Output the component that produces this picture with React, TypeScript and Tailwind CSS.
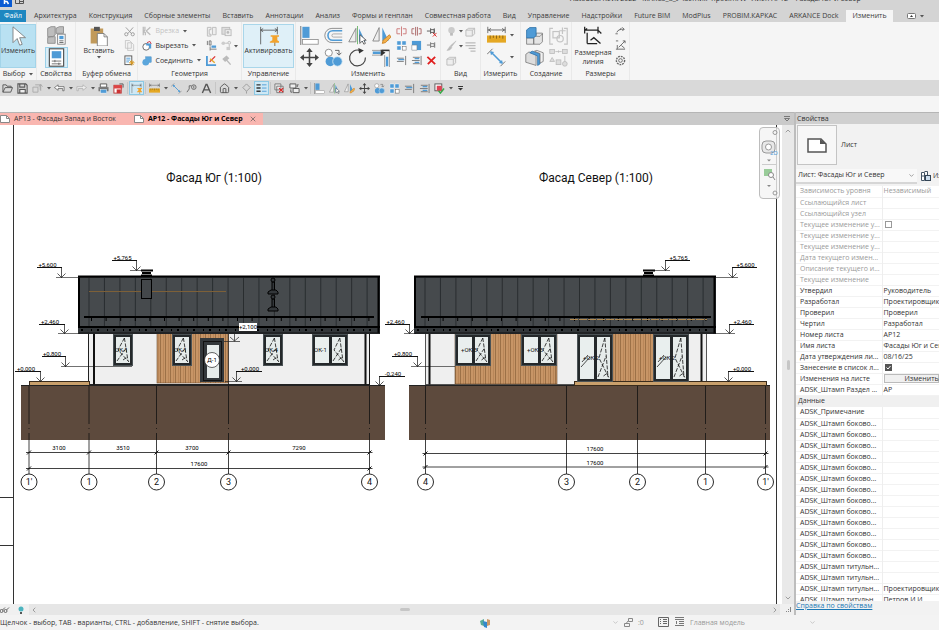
import React from 'react';
import { ChevronDown, ChevronLeft, ChevronRight, ChevronUp, X, Home } from 'lucide-react';

interface IconProps {
  name: string;
  size?: number;
}

const BLUE = '#4f9bd6';
const DARK = '#555';

/* All ribbon glyphs share a 24x24 box */
const glyphs: Record<string, React.ReactNode> = {
  cursor: <path d="M6 1v19l5-5 3 8 3-1-3-8h7z" fill="#fff" stroke="#777" />,
  types: (
    <>
      <path d="M2 4l4-2h5v10l-3 2H2zM12 4l4-2h5v8H12zM2 15l4-1h5v8H2z" fill="#bdbdbd" stroke="#888" />
      <rect x="14" y="11" width="9" height="12" fill="#fff" stroke="#777" />
      <rect x="16" y="13" width="5" height="4" fill={BLUE} />
      <path d="M16 19h5M16 21h5" stroke={DARK} />
    </>
  ),
  props: (
    <>
      <rect x="3" y="1" width="18" height="22" fill="#fff" stroke={DARK} strokeWidth="1.5" />
      <rect x="6" y="4" width="12" height="9" fill={BLUE} />
      <path d="M6 16.500h12M6 20h12M10 15v3M15 18.500v3" stroke={DARK} />
    </>
  ),
  paste: (
    <>
      <rect x="2" y="3" width="15" height="18" fill="#c19a5b" />
      <rect x="6" y="1" width="7" height="5" fill="#555" />
      <path d="M10 9h8l4 4v11H10z" fill="#fff" stroke="#777" />
      <path d="M18 9v4h4" fill="none" stroke="#777" />
    </>
  ),
  cut: (
    <g stroke="#999" strokeWidth="2" fill="none">
      <path d="M4 3l13 14M20 3L8 17" />
      <circle cx="5" cy="18" r="3.500" />
      <circle cx="19" cy="18" r="3.500" />
    </g>
  ),
  copy: <path d="M3 1h9l4 4v13H3zM8 6h9l4 4v13H8z" fill="#f2f2f2" stroke="#bbb" strokeWidth="1.5" />,
  matchType: (
    <>
      <rect x="2" y="2" width="15" height="19" fill="#fff" stroke={DARK} strokeWidth="2" />
      <path d="M5 7h9M5 11h9M5 15h6" stroke={BLUE} strokeWidth="2" />
      <path d="M17 11v12M11 17h12M13 13l8 8M21 13l-8 8" stroke="#d9981e" strokeWidth="2" />
    </>
  ),
  cope: <path d="M3 2v20M7 2v8l-3 3 4 3v6M10 12L20 3M10 12l10 9" fill="none" stroke="#bbb" strokeWidth="3" />,
  trim: (
    <>
      <circle cx="10" cy="14" r="8" fill="#fff" stroke={DARK} strokeWidth="2" />
      <path d="M10 6h12v12h-5V11H10z" fill={BLUE} />
      <path d="M12 4l7-3 3 6" fill="none" stroke="#c23" strokeWidth="2" />
    </>
  ),
  join: (
    <>
      <rect x="9" y="2" width="13" height="13" fill="#5ba6dc" stroke="#2b78b8" />
      <circle cx="9" cy="15" r="8" fill="#5ba6dc" />
    </>
  ),
  wallJoin: <path d="M3 3h8v5H7v10h4v4H3zM14 3h8v16h-8z" fill="#eee" stroke="#bbb" strokeWidth="2" />,
  face: (
    <>
      <rect x="2" y="3" width="17" height="15" fill="#ddd" stroke="#bbb" strokeWidth="2" />
      <rect x="9" y="8" width="13" height="13" fill="#eee" stroke="#bbb" strokeWidth="2" />
      <circle cx="15" cy="14" r="3" fill="#bbb" />
    </>
  ),
  unjoin: (
    <>
      <path d="M3 2v9M7 2h4v9H7zM9 20h14M9 14v9" fill="none" stroke="#777" strokeWidth="2" />
      <path d="M12 12h10v5H12z" fill={BLUE} />
    </>
  ),
  link: (
    <>
      <path d="M9 7h6M18 10v5" stroke="#bbb" strokeWidth="2" />
      <circle cx="5" cy="7" r="4" fill="#ccc" />
      <circle cx="18" cy="6" r="3" fill="#eee" stroke="#bbb" strokeWidth="2" />
      <rect x="12" y="15" width="8" height="7" fill="#ccc" />
    </>
  ),
  paint: (
    <>
      <path d="M2 2v20h20" fill="none" stroke={BLUE} strokeWidth="4" />
      <path d="M8 15L20 3" stroke="#d33" strokeWidth="3" />
      <path d="M9 8l10 9" stroke="#e3a62a" strokeWidth="3" />
    </>
  ),
  hammer: <path d="M5 9l7-6 4 4-7 6zM11 10l10 11" fill="#bbb" stroke="#bbb" strokeWidth="3" />,
  activate: (
    <>
      <path d="M2 1v21M22 1v9M2 5h20M5 3L2 5l3 2M19 3l3 2-3 2" fill="none" stroke={DARK} />
      <path d="M14 11h10v2h-2v4l3 2v1H13v-1l3-2v-4h-2z" fill="#f2a32c" />
      <path d="M19 20v4" stroke="#8a5a10" />
    </>
  ),
  align: (
    <>
      <rect x="3" y="1" width="9" height="14" fill={BLUE} />
      <rect x="3" y="17" width="20" height="6" fill="#fff" stroke="#888" />
      <path d="M1 0v24" stroke={DARK} />
    </>
  ),
  offset: (
    <>
      <path d="M23 3H10a9 9 0 000 18h13" fill="none" stroke="#777" />
      <path d="M23 6H11a6 6 0 000 12h12" fill="none" stroke={BLUE} strokeWidth="2" />
      <path d="M23 10H12a2 2 0 000 4h11" fill="none" stroke="#999" />
    </>
  ),
  mirrorPick: (
    <>
      <path d="M10 3v17H1z" fill="#eee" stroke="#777" />
      <path d="M14 3v17h8z" fill={BLUE} />
      <path d="M12 0v23" stroke="#5a5" />
      <path d="M15 11v11l3-3 2 4 2-1-2-4h3z" fill="#fff" stroke="#444" />
    </>
  ),
  mirrorDraw: (
    <>
      <path d="M9 2v17H1z" fill="#eee" stroke="#777" />
      <path d="M13 2v17h8z" fill={BLUE} />
      <path d="M13 22l1-4 8-7 2 3-7 7z" fill="#f2b04a" stroke="#c77c1f" />
    </>
  ),
  move: (
    <path d="M12 0l4 5h-3v6h6V8l5 4-5 4v-3h-6v6h3l-4 5-4-5h3v-6H5v3l-5-4 5-4v3h6V5H8z" fill="#444" />
  ),
  copyEl: (
    <>
      <circle cx="6" cy="6" r="4.500" fill="#fff" stroke="#777" />
      <path d="M14 3h5v5M16 6l3 3 3-3" fill="none" stroke="#444" />
      <circle cx="8" cy="17" r="6" fill={BLUE} />
      <circle cx="17" cy="17" r="6" fill={BLUE} stroke="#d8ecf8" />
    </>
  ),
  rotate: (
    <>
      <path d="M15 3A10 10 0 1022 12" fill="none" stroke="#444" strokeWidth="1.500" />
      <path d="M13 0l7 3-6 4z" fill="#333" />
    </>
  ),
  trimCorner: (
    <>
      <path d="M0 3h14M0 9h14M16 9v15M22 3v21" fill="none" stroke="#888" />
      <path d="M1 6h10M19 11v12" stroke={BLUE} strokeWidth="3" />
      <path d="M12 3h10" stroke="#333" strokeWidth="2" />
      <path d="M11 2l6 4-6 4z" fill="#333" />
    </>
  ),
  split: <path d="M9 6H2v11h7M15 6h7v11h-7M12 1v21" fill="none" stroke="#c77" strokeWidth="2" />,
  splitGap: <path d="M7 6H2v11h5M17 6h5v11h-5M10 2v19M14 2v19" fill="none" stroke="#a66" strokeWidth="2" />,
  unpin: (
    <>
      <path d="M2 11h8M10 5v12M10 8h8v6h-8M18 5v12" fill="none" stroke={DARK} strokeWidth="2" />
      <path d="M15 15l8 8M23 15l-8 8" stroke="#d22" strokeWidth="2" />
    </>
  ),
  array: (
    <>
      <path d="M2 2h9v9H2zM13 2h9v9h-9zM2 13h9v9H2z" fill={BLUE} stroke="#fff" />
      <rect x="14" y="14" width="8" height="8" fill="#fff" stroke={DARK} />
    </>
  ),
  scale: (
    <>
      <rect x="2" y="2" width="20" height="20" fill={BLUE} />
      <rect x="2" y="11" width="11" height="11" fill="#fff" stroke="#777" />
    </>
  ),
  pin: <path d="M2 11h8M10 5v12M10 8h8v6h-8M19 5v12" fill="none" stroke="#777" strokeWidth="2" />,
  trimOne: (
    <>
      <path d="M2 7h15M2 14h15M21 2v20" stroke="#777" strokeWidth="2" />
      <path d="M5 10h13" stroke={BLUE} strokeWidth="3" />
    </>
  ),
  trimMany: (
    <>
      <path d="M4 5h15M2 12h17M4 19h15M22 2v20" stroke="#777" strokeWidth="2" />
      <path d="M8 8h10M8 16h10" stroke={BLUE} strokeWidth="3" />
    </>
  ),
  remove: <path d="M3 4l17 16M20 4L4 20" stroke="#e02020" strokeWidth="4" />,
  bulb: (
    <>
      <circle cx="12" cy="9" r="7" fill="#ccc" />
      <path d="M9 15h6v6H9z" fill="#bbb" />
    </>
  ),
  brush: <path d="M22 2L10 12l2 3zM9 13l4 4-5 5-6 1z" fill="#bbb" stroke="#bbb" />,
  box: <path d="M2 9l6-4h13v12l-5 5H2zM2 9h14v13M16 9l5-4" fill="#eee" stroke="#bbb" strokeWidth="2" />,
  lines: <path d="M1 4h22M1 10h22M8 16h15M12 22h11" stroke="#bbb" strokeWidth="2.500" />,
  ruler: (
    <>
      <path d="M1 1v8M23 1v8M1 5h22M5 3L2 5l3 2M19 3l3 2-3 2" fill="none" stroke="#555" />
      <rect x="0" y="12" width="24" height="9" fill="#e5a823" />
      <path d="M4 12v4M8 12v3M12 12v4M16 12v3M20 12v4" stroke="#775510" />
    </>
  ),
  dim: (
    <>
      <path d="M5 5l14 14" stroke={BLUE} strokeWidth="2" />
      <path d="M0 8l7-7M17 23l6-6" stroke="#555" />
      <path d="M4 4l5 1-4 4zM20 20l-5-1 4-4z" fill={BLUE} />
    </>
  ),
  assembly: (
    <>
      <path d="M2 15h9v8H2zM11 13h8l3-3v10l-3 3h-8zM14 12V9h8v2" fill="#e4e4e4" stroke="#777" />
      <path d="M2 5l4-3h8v10l-3 3H2z" fill={BLUE} stroke="#2c70a8" />
    </>
  ),
  group: (
    <g fill="none" stroke="#c4c4c4" strokeWidth="1.500">
      <path d="M5 3H1v20h4M19 3h4v20h-4" />
      <rect x="5" y="7" width="8" height="8" />
      <circle cx="14" cy="16" r="4" />
      <path d="M17 2v8M13 6h8" />
    </g>
  ),
  parts: (
    <>
      <path d="M1 8l4-3 9 3v14l-13-4z" fill="#ddd" stroke="#777" />
      <path d="M6 6l3-2 10 3v13l-3 2V10z" fill={BLUE} stroke="#2c70a8" />
      <path d="M12 4l3-1 8 3v11l-4 2V7z" fill="#f2f2f2" stroke="#777" />
    </>
  ),
  similar: (
    <g fill="#ddd" stroke="#bbb">
      <rect x="1" y="2" width="6" height="5" />
      <rect x="17" y="2" width="6" height="5" />
      <path d="M8 4.500h8M12 3v3M4 12l-3 5h6zM20 10v8" />
      <rect x="9" y="15" width="6" height="6" />
      <circle cx="20" cy="20" r="3" />
    </g>
  ),
  dimLine: (
    <>
      <path d="M2 5h16M2 1v8M18 1v8M5 8v13M5 21h12M2 5l3-2M18 5l4 4" fill="none" stroke="#222" strokeWidth="1.500" />
      <path d="M9 17l4-3 8 7" fill="none" stroke="#222" strokeWidth="1.500" />
    </>
  ),
  arc: <path d="M1 17h5M4 14c2-6 8-7 16-7M14 4l-4 5M20 7l-4-4M20 7l-4 4" fill="none" stroke="#666" strokeWidth="2" />,
  arc2: <path d="M2 2h5M17 2h5v5M22 2L8 16M2 20h20M5 11v9M14 12l7 6" fill="none" stroke="#666" strokeWidth="2" />,
  gear: (
    <g fill="none" stroke="#666" strokeWidth="2">
      <circle cx="12" cy="12" r="4" />
      <circle cx="12" cy="12" r="9" strokeDasharray="4 2" strokeWidth="3" />
    </g>
  ),
  open: <path d="M2 20V4h7l2 3h9v3M2 20l5-10h16l-4 10z" fill="none" stroke={DARK} strokeWidth="2" />,
  save: <path d="M2 2h17l3 3v17H2zM6 2v7h11V2M6 22v-8h12v8" fill="#eee" stroke={DARK} strokeWidth="2.500" />,
  sync: <path d="M2 9h11v11H2zM7 4h11v11M15 8l4-5 4 5M19 3v14" fill="none" stroke="#aaa" strokeWidth="2" />,
  undo: <path d="M9 4L1 10l8 6v-4h10v5h3V8H9z" fill="#fff" stroke={DARK} strokeWidth="1.500" />,
  redo: <path d="M15 4l8 6-8 6v-4H5v5H2V8h13z" fill="#eee" stroke="#aaa" strokeWidth="1.500" />,
  print: (
    <>
      <path d="M5 2h14v7H5z" fill="#fff" stroke={DARK} strokeWidth="2" />
      <rect x="1" y="9" width="22" height="9" fill="#777" />
      <rect x="5" y="14" width="14" height="8" fill={BLUE} stroke="#fff" />
    </>
  ),
  pdf: (
    <>
      <rect x="2" y="5" width="16" height="17" fill="#fff" stroke="#b33" strokeWidth="2" />
      <path d="M2 5h18v7H2z" fill="#d44" />
      <path d="M8 14h9v8H8z" fill="#c33" />
      <path d="M14 2h8v8" stroke="#555" fill="none" strokeWidth="2" />
    </>
  ),
  tagFull: (
    <g fill="none" stroke="#666" strokeWidth="2">
      <path d="M2 20l5-7V6h5" />
      <circle cx="17" cy="9" r="5" />
      <path d="M17 6v6" />
    </g>
  ),
  text: <path d="M3 22L11 3h2l8 19M7 15h10" fill="none" stroke="#555" strokeWidth="3" />,
  section: <path d="M12 2l8 8-8 8-8-8zM12 18v5" fill="none" stroke="#999" strokeWidth="2" />,
  thin: (
    <>
      <path d="M1 4h9M1 11h9M1 18h9" stroke="#333" strokeWidth="3" />
      <path d="M13 4h10M13 11h10M13 18h10" stroke={BLUE} strokeWidth="2" />
    </>
  ),
  closeWin: (
    <>
      <path d="M2 2h13v13H2zM6 7h14v14H6z" fill="#eee" stroke="#777" strokeWidth="2" />
      <path d="M11 11l9 9M20 11l-9 9" stroke="#d22" strokeWidth="2.500" />
    </>
  ),
  switchWin: <path d="M2 2h13v9H2zM9 12h13v9H9zM4 14v6h3M18 9V4h3" fill="#eee" stroke="#555" strokeWidth="2" />,
  selBox: (
    <>
      <rect x="2" y="2" width="15" height="15" fill="#fff" stroke={DARK} strokeWidth="2" />
      <rect x="6" y="6" width="11" height="11" fill="#d45" />
      <path d="M10 17l4 5 8-10" fill="none" stroke="#3a4" strokeWidth="3" />
    </>
  ),
};

const Icon = ({ name, size = 12 }: IconProps) => (
  <svg width={size} height={size} viewBox="0 0 24 24" className="block shrink-0" aria-hidden="true">
    {glyphs[name]}
  </svg>
);

const Arrow = () => (
  <svg width="4" height="3" viewBox="0 0 4 3" className="shrink-0" aria-hidden="true">
    <path d="M0 0h4L2 2.500z" fill="#555" />
  </svg>
);

const menuTabs = [
  'Архитектура', 'Конструкция', 'Сборные элементы', 'Вставить', 'Аннотации', 'Анализ', 'Формы и генплан',
  'Совместная работа', 'Вид', 'Управление', 'Надстройки', 'Future BIM', 'ModPlus', 'PROBIM.КАРКАС', 'ARKANCE Dock',
];

const TitleBar = () => (
  <header className="flex h-2.5 shrink-0 overflow-hidden bg-[#d4d4d4]">
    <svg width="12" height="7" viewBox="0 0 12 7" aria-hidden="true">
      <rect width="12" height="7" fill="#0a5bd3" />
      <path d="M4.500 0v4M5 1.500h2l1.500 2.500" fill="none" stroke="#fff" strokeWidth="1.500" />
    </svg>
    <svg width="9" height="6" viewBox="0 0 9 6" className="ml-[3px]">
      <path d="M.5 0v3.500h8V0M4.500 0v3M5 1.500h3" fill="none" stroke="#555" />
    </svg>
    <div className="-mt-2 ml-[546px] text-[7px] leading-[14px] whitespace-nowrap text-[#333]">
      Autodesk Revit 2022 - МАКС3_8_Участник+проект.rvt - Лист: АР12 - Фасады Юг и Север
    </div>
  </header>
);

const MenuTabs = () => (
  <nav className="flex h-3 shrink-0 items-stretch bg-[#d4d4d4] whitespace-nowrap text-[#3c3c3c]">
    <button className="mr-0.5 w-[26px] bg-[#1e87c0] text-white">Файл</button>
    {menuTabs.map((tab) => (
      <button key={tab} className="px-1.5">
        {tab}
      </button>
    ))}
    <button className="ml-0.5 bg-[#f5f5f5] px-1.5">Изменить</button>
    <button className="ml-3.5 flex items-center gap-1" aria-label="Свернуть ленту">
      <svg width="9" height="6" viewBox="0 0 9 6">
        <rect x=".5" y=".5" width="8" height="5" rx="1" fill="#fff" stroke="#777" />
        <path d="M3 4l1.500-2L6 4z" fill="#333" />
      </svg>
      <Arrow />
    </button>
  </nav>
);

interface PanelProps {
  title: string;
  width: string;
  drop?: boolean;
  children: React.ReactNode;
}

const Panel = ({ title, width, drop, children }: PanelProps) => (
  <section className={`flex shrink-0 flex-col border-r border-[#e9e9e9] pt-0.5 ${width}`}>
    <div className="flex flex-1 items-stretch justify-center">{children}</div>
    <div className="flex h-3 items-center justify-center gap-1 whitespace-nowrap">
      {title}
      {drop && <Arrow />}
    </div>
  </section>
);

const Stack = ({ names }: { names: string[] }) => (
  <div className="flex w-[15px] flex-col items-center justify-around">
    {names.map((name, i) => (
      <button key={i} aria-label={name}>
        <Icon name={name} size={11} />
      </button>
    ))}
  </div>
);

const BigPair = ({ names, drop }: { names: string[]; drop?: boolean }) => (
  <div className="flex flex-col justify-around">
    {names.map((name) => (
      <button key={name} aria-label={name} className={`flex items-center justify-center gap-1 ${drop ? 'w-8' : 'w-6'}`}>
        <Icon name={name} size={19} />
        {drop && <Arrow />}
      </button>
    ))}
  </div>
);

const Ribbon = () => (
  <div className="flex h-[58px] shrink-0 bg-[#f5f5f5]">
    <Panel title="Выбор" width="w-[37px]" drop>
      <button className="flex w-full flex-col items-center border border-[#a3d4e9] bg-[#b9e1f2] pt-px">
        <Icon name="cursor" size={20} />
        <span>Изменить</span>
      </button>
    </Panel>
    <Panel title="Свойства" width="w-[39px]">
      <div className="flex flex-col items-center justify-between">
        <button aria-label="Типоразмер" className="pt-px">
          <Icon name="types" size={20} />
        </button>
        <button aria-label="Свойства" className="border border-[#9bd0e8] bg-[#d9eef8] px-px">
          <Icon name="props" size={19} />
        </button>
      </div>
    </Panel>
    <Panel title="Буфер обмена" width="w-[62px]">
      <button className="flex flex-1 flex-col items-center pt-0.5">
        <Icon name="paste" size={20} />
        <span>Вставить</span>
        <Arrow />
      </button>
      <Stack names={['cut', 'copy', 'matchType']} />
    </Panel>
    <Panel title="Геометрия" width="w-[104px]">
      <div className="flex w-[62px] flex-col justify-around">
        <button className="flex items-center gap-1 text-[#c4c4c4]">
          <Icon name="cope" size={10} />
          Врезка
          <Arrow />
        </button>
        <button className="flex items-center gap-1">
          <Icon name="trim" size={10} />
          Вырезать
          <Arrow />
        </button>
        <button className="flex items-center gap-1">
          <Icon name="join" size={10} />
          Соединить
          <Arrow />
        </button>
      </div>
      <Stack names={['wallJoin', 'unjoin', 'paint']} />
      <Stack names={['face', 'link', 'hammer']} />
      <div className="flex items-center">
        <Arrow />
      </div>
    </Panel>
    <Panel title="Управление" width="w-[54px]">
      <button className="flex w-[51px] flex-col items-center border border-[#a9d6ea] bg-[#dff0f8] pt-px">
        <Icon name="activate" size={20} />
        <span>Активировать</span>
      </button>
    </Panel>
    <Panel title="Изменить" width="w-[145px]">
      <BigPair names={['align', 'move']} />
      <BigPair names={['offset', 'copyEl']} />
      <BigPair names={['mirrorPick', 'rotate']} />
      <BigPair names={['mirrorDraw', 'trimCorner']} />
      <Stack names={['split', 'array', 'trimOne']} />
      <Stack names={['splitGap', 'scale', 'trimMany']} />
      <Stack names={['unpin', 'pin', 'remove']} />
    </Panel>
    <Panel title="Вид" width="w-10">
      <Stack names={['bulb', 'brush', 'box']} />
      <div className="flex flex-col justify-around pb-3.5">
        <Arrow />
        <Arrow />
      </div>
      <div className="flex pb-3.5">
        <Stack names={['box', 'lines']} />
      </div>
    </Panel>
    <Panel title="Измерить" width="w-10">
      <BigPair names={['ruler', 'dim']} drop />
    </Panel>
    <Panel title="Создание" width="w-[51px]">
      <BigPair names={['assembly', 'parts']} />
      <BigPair names={['group', 'similar']} />
    </Panel>
    <Panel title="Размеры" width="w-[58px]">
      <button className="flex w-10 flex-col items-center pt-0.5 leading-[9px]">
        <Icon name="dimLine" size={20} />
        <span className="mt-0.5">Размерная</span>
        <span>линия</span>
      </button>
      <Stack names={['arc', 'arc2', 'gear']} />
    </Panel>
  </div>
);

/* '>' is a drop-down arrow, '|' a divider, a leading '*' marks an active tool */
const quickItems = [
  'open', 'save', 'sync', '>', 'undo', '>', 'redo', '>', 'print', 'pdf', '|', '*activate', '|', 'ruler', '>', 'dim',
  'tagFull', 'text', '|', 'home', '>', 'section', '*thin', '|', 'closeWin', 'switchWin', '>', '|', 'align', 'mirrorPick',
  'mirrorDraw', 'move', 'copyEl', 'array', 'trimOne', 'trimMany', 'selBox', '>',
];

const QuickAccess = () => (
  <div className="flex h-4 shrink-0 items-center bg-[#d9d9d9]">
    {quickItems.map((item, i) => {
      if (item === '|') return <span key={i} className="mx-px h-3 w-px bg-[#c6c6c6]" />;
      if (item === '>') {
        return (
          <button key={i} aria-label="Ещё" className="flex w-[7px] justify-center">
            <Arrow />
          </button>
        );
      }
      const active = item.startsWith('*');
      const name = active ? item.slice(1) : item;
      return (
        <button
          key={i}
          aria-label={name}
          className={`flex h-[14px] w-[15px] items-center justify-center ${active ? 'border border-[#8cc8e4] bg-[#cfe8f4]' : ''}`}
        >
          {name === 'home' ? <Home size={11} color="#555" strokeWidth={2} /> : <Icon name={name} size={11} />}
        </button>
      );
    })}
    <svg width="5" height="5" viewBox="0 0 5 5" className="ml-1">
      <path d="M0 .5h5" stroke="#333" />
      <path d="M0 2h5L2.500 4.500z" fill="#333" />
    </svg>
  </div>
);

const SheetIcon = () => (
  <svg width="10" height="8" viewBox="0 0 10 8" className="shrink-0">
    <path d="M.5.5h6l3 3v4h-9z" fill="#fff" stroke="#888" />
    <path d="M6.500.5v3h3" fill="none" stroke="#888" />
  </svg>
);

const DocTabs = () => (
  <div className="flex h-[13px] shrink-0 items-stretch border-t border-[#b5b5b5] bg-[#cacaca] whitespace-nowrap">
    <button className="flex w-[128px] items-center gap-1 bg-[#f9b6b0]">
      <SheetIcon />
      АР13 - Фасады Запад и Восток
    </button>
    <div className="flex items-center gap-1 bg-[#f9b6b0] px-1.5 font-bold text-black">
      <SheetIcon />
      АР12 - Фасады Юг и Север
      <button aria-label="Закрыть" className="ml-0.5">
        <X size={8} color="#555" />
      </button>
    </div>
    <div className="flex flex-1 items-center justify-end pr-1">
      <svg width="6" height="6" viewBox="0 0 6 6">
        <path d="M0 .5h6" stroke="#777" />
        <path d="M.5 2.500h5L3 5z" fill="none" stroke="#777" />
      </svg>
    </div>
  </div>
);

/* ---------- Sheet drawing ---------- */

interface LevelProps {
  label: string;
  x: number; // leader
  y: number; // tip of the arrow
  h: number; // leader height
  from: number; // shelf start
  to: number; // shelf end
  base?: [number, number];
}

const levels: LevelProps[] = [
  { label: '+5,600', x: 61.5, y: 277.5, h: 10, from: 37, to: 62, base: [56, 100] },
  { label: '+5,765', x: 136.5, y: 270.5, h: 10, from: 112, to: 137, base: [130, 150] },
  { label: '+2,460', x: 64.5, y: 333.5, h: 9, from: 39, to: 65, base: [58, 80] },
  { label: '+0,800', x: 65.5, y: 366.5, h: 10, from: 42, to: 66, base: [61, 132] },
  { label: '+0,000', x: 40.5, y: 381.5, h: 10, from: 15, to: 41 },
  { label: '+0,000', x: 236.5, y: 381.5, h: 10, from: 236, to: 262, base: [225, 242] },
  { label: '+2,460', x: 409.5, y: 333.5, h: 9, from: 385, to: 410, base: [404, 416] },
  { label: '+0,800', x: 417.5, y: 366.5, h: 10, from: 392, to: 418, base: [411, 455] },
  { label: '-0,240', x: 379.5, y: 385.5, h: 9, from: 379, to: 405 },
  { label: '+5,765', x: 665.5, y: 270.5, h: 10, from: 665, to: 690, base: [643, 670] },
  { label: '+5,600', x: 732.5, y: 277.5, h: 10, from: 732, to: 757, base: [716, 738] },
  { label: '+2,460', x: 729.5, y: 333.5, h: 9, from: 729, to: 754, base: [713, 735] },
  { label: '+0,000', x: 728.5, y: 381.5, h: 10, from: 728, to: 754 },
];

const Level = ({ label, x, y, h, from, to, base }: LevelProps) => (
  <g stroke="#111" fill="none">
    <path d={`M${from} ${y - h}H${to}`} />
    <path d={`M${x} ${y - h}V${y}`} strokeWidth=".7" />
    <path d={`M${x - 4} ${y - 4}l4 4l4-4`} strokeWidth=".7" />
    {base && <path d={`M${base[0]} ${y}H${base[1]}`} strokeWidth=".6" />}
    <text x={(from + to) / 2 - (x > to - 5 ? 2 : -1)} y={y - h - 1} fill="#000" stroke="none" fontSize="6" textAnchor="middle">
      {label}
    </text>
  </g>
);

const Roof = ({ x, guard }: { x: number; guard: number }) => (
  <g>
    <rect x={x} y="276" width="302" height="58" fill="#33373a" />
    <rect x={x + 2} y="278" width="298" height="48" fill="#464a4d" />
    {Array.from({ length: 19 }, (_, i) => (
      <path key={i} d={`M${x + 11 + i * 15.45} 278V326`} stroke="#222628" strokeWidth=".8" />
    ))}
    <path d={`M${x} 276.500h302M${x + 1} 276V328M${x + 300.5} 276V333M${x} 327h302`} stroke="#000" strokeWidth="2" />
    <path d={`M${guard} 317h290`} stroke="#000" strokeWidth="2" />
    <path d={`M${guard + 7} 319.500h280`} stroke="#000" strokeWidth="3" strokeDasharray="1 13.6" />
    <path d={`M${x + 3} 330h296`} stroke="#000" strokeWidth="2" strokeDasharray="2 8 1 5" />
    <path d={`M${x + 1} 333h301`} stroke="#111" />
  </g>
);

const Wood = ({ x, y, w, h }: { x: number; y: number; w: number; h: number }) => (
  <rect x={x} y={y} width={w} height={h} fill="url(#planks)" stroke="#6b4a2c" strokeWidth=".6" />
);

/* Opening sash with the hatch that marks its swing */
const Sash = ({ x, y, w, h }: { x: number; y: number; w: number; h: number }) => (
  <g>
    <rect x={x} y={y} width={w} height={h} fill="#e6eceb" />
    <path
      d={`M${x + w * 0.6} ${y + 1}L${x + 2} ${y + h * 0.5}L${x + w - 1} ${y + h - 1}M${x + w * 0.6} ${y + 1}L${x + w - 2} ${y + h - 2}M${x + 1} ${y + h - 2}L${x + w * 0.7} ${y + h * 0.45}M${x + w * 0.5} ${y + h - 3}l${w * 0.3}-3`}
      stroke="#111"
      strokeWidth=".8"
      strokeDasharray="4 1.500"
      fill="none"
    />
  </g>
);

interface WindowProps {
  x: number;
  w: number;
  h?: number;
  label: string;
  double?: boolean;
}

const Win = ({ x, w, h = 32, label, double }: WindowProps) => (
  <g>
    <rect x={x} y="334" width={w} height={h} fill="#24282a" />
    <rect x={x + 0.5} y="334.5" width={w - 1} height={h - 1} fill="none" stroke="#4b5356" />
    {double && <rect x={x + 3} y="337" width="14" height={h - 6} fill="#e9efee" />}
    {double ? <Sash x={x + 20} y={337} w={w - 23} h={h - 6} /> : <Sash x={x + 3} y={337} w={w - 6} h={h - 6} />}
    {h > 40 && <path d={`M${x + 4} 367l9-10M${x + 5} 362l6-7`} stroke="#222" strokeWidth=".8" />}
    <text x={label.startsWith('+') ? x + 6 : x + 2} y={h > 40 ? 360 : 352} fontSize="6" fill="#111">
      {label}
    </text>
  </g>
);

const Axis = ({ x, label, top = 386 }: { x: number; label: string; top?: number }) => (
  <g>
    <path d={`M${x} ${top}V424M${x} 428v1M${x} 433V474`} stroke="#111" strokeWidth=".8" />
    <circle cx={x} cy="482" r="8" fill="#fff" stroke="#111" strokeWidth=".9" />
    <text x={x} y="485" fontSize="9" textAnchor="middle" fill="#111">
      {label}
    </text>
  </g>
);

const DimLine = ({ y, stops }: { y: number; stops: number[] }) => (
  <g stroke="#111">
    <path d={`M${stops[0] - 3} ${y}H${stops[stops.length - 1] + 3}`} strokeWidth=".8" />
    {stops.map((s) => (
      <path key={s} d={`M${s - 2} ${y + 2}l4-4`} />
    ))}
  </g>
);

const Note = ({ x, y, children }: { x: number; y: number; children: string }) => (
  <text x={x} y={y} fontSize="6" textAnchor="middle" fill="#000">
    {children}
  </text>
);

const Vent = ({ y }: { y: number }) => (
  <g fill="#33373a" stroke="#000">
    <path d={`M272 ${y + 2}h2.500v9H272z`} />
    <path d={`M268 ${y + 14}v-2l3-2h5l2 2v2z`} />
    <circle cx="273" cy={y} r="2" />
  </g>
);

const SheetDrawing = () => (
  <svg viewBox="0 125 782 479" preserveAspectRatio="xMinYMin meet" className="block h-full w-full font-['Roboto','Liberation_Sans',sans-serif]">
    <defs>
      <pattern id="planks" width="5" height="10" patternUnits="userSpaceOnUse">
        <rect width="5" height="10" fill="#c79566" />
        <rect width="1" height="10" fill="#9c7147" />
        <rect x="3" width="1" height="10" fill="#b98658" />
      </pattern>
    </defs>
    <path d="M13.500 125V604M776.500 125V604M0 497.500h13M0 545.500h13" stroke="#333" fill="none" />

    <text x="214" y="182" fontSize="12" textAnchor="middle" fill="#111">Фасад Юг (1:100)</text>
    <text x="596" y="182" fontSize="12" textAnchor="middle" fill="#111">Фасад Север (1:100)</text>

    {/* South facade */}
    <rect x="88.5" y="333" width="281" height="51.500" fill="#efefef" stroke="#222" />
    <rect x="21" y="386" width="364" height="54" fill="#5d4a3d" />
    <Axis x={29} label="1'" />
    <Axis x={89} label="1" />
    <Axis x={156.5} label="2" />
    <Axis x={228.5} label="3" top={334} />
    <Axis x={369.5} label="4" top={334} />
    <Wood x={157} y={333} w={71} h={50} />
    <path d="M94 330v54.500M365.500 330v54.500" stroke="#111" strokeWidth="2" />
    <rect x="29.5" y="381.5" width="60" height="4" fill="#c9a06c" stroke="#3a2c1c" />
    <path d="M21 385.500H385" stroke="#222" />
    <Win x={113} w={20} label="ОК-1" />
    <Win x={172} w={20} label="ОК-1" />
    <Win x={263} w={20} label="ОК-4" />
    <Win x={312} w={36} label="ОК-1" double />
    <rect x="200" y="338" width="24" height="44" fill="#33383b" />
    <rect x="203.5" y="341.5" width="18" height="39" fill="none" stroke="#111" />
    <rect x="207" y="345" width="12" height="33" fill="#e6eceb" />
    <circle cx="212" cy="360" r="7.500" fill="#fff" stroke="#222" strokeWidth=".7" />
    <text x="212" y="362" fontSize="6" textAnchor="middle">Д-1</text>
    <Roof x={78} guard={84} />
    <path d="M89 291.500H226" stroke="#7d6038" />
    <rect x="141.500" y="279.500" width="10" height="19" fill="#43474a" stroke="#000" />
    <path d="M141 270.500h12M142 273h9M141 275.500h11" stroke="#000" strokeWidth="2" />
    <Vent y={280} />
    <Vent y={297} />
    <DimLine y={452.5} stops={[29, 89, 156.5, 228.5, 369.5]} />
    <DimLine y={468.5} stops={[29, 369.5]} />
    <Note x={59} y={450}>3100</Note>
    <Note x={123} y={450}>3510</Note>
    <Note x={192} y={450}>3700</Note>
    <Note x={299} y={450}>7290</Note>
    <Note x={199} y={466}>17600</Note>
    <rect x="239" y="323" width="18" height="8" fill="#fff" />
    <Note x={248} y={329}>+2,100</Note>
    <path d="M239 331.500h18M234.500 333v8M230 337l4.500 4 4.500-4M224 341.500h16" stroke="#222" strokeWidth=".7" fill="none" />

    {/* North facade */}
    <rect x="425.5" y="333" width="281" height="51.500" fill="#efefef" stroke="#555" />
    <rect x="409" y="386" width="361" height="54" fill="#5d4a3d" />
    <Axis x={425.5} label="4" />
    <Axis x={566.5} label="3" />
    <Axis x={637.5} label="2" />
    <Axis x={705.5} label="1" />
    <Axis x={765.5} label="1'" />
    <Wood x={455} y={333} w={102} h={51} />
    <Wood x={612} y={333} w={42} h={49} />
    <path d="M429.500 330v54.500M701.500 330v54.500" stroke="#111" strokeWidth="2" />
    <path d="M409 385.500H770" stroke="#222" />
    <rect x="574.5" y="381.500" width="192" height="4" fill="#c9a06c" stroke="#3a2c1c" />
    <Win x={455} w={36} label="+ОК-3" double />
    <Win x={521} w={36} label="+ОК-3" double />
    <Win x={577} w={36} h={48} label="+ОК-2" double />
    <Win x={653} w={36} h={48} label="+ОК-2" double />
    <Roof x={414} guard={421} />
    <path d="M570 319.500H707" stroke="#b08a52" strokeDasharray="8 1" />
    <path d="M643 270.500h12M644 273h9M643 275.500h11" stroke="#000" strokeWidth="2" />
    <DimLine y={453.5} stops={[425.5, 765.5]} />
    <DimLine y={467} stops={[425.5, 765.5]} />
    <Note x={595} y={451}>17600</Note>
    <Note x={595} y={465}>17600</Note>

    {levels.map((level, i) => (
      <Level key={i} {...level} />
    ))}
  </svg>
);

const NavBar = () => (
  <div className="absolute top-0.5 right-0.5 flex h-[72px] w-[21px] flex-col items-center rounded border border-[#bdbdbd] bg-[#f4f4f4]/80 py-0.5">
    <svg width="19" height="66" viewBox="0 0 19 66" aria-hidden="true">
      <circle cx="15" cy="2.500" r="2" fill="none" stroke="#999" />
      <rect x="2" y="11" width="13" height="12" rx="4" fill="#e8e8e8" stroke="#999" />
      <circle cx="8.500" cy="17" r="3" fill="#fff" stroke="#999" />
      <text x="10" y="25" fontSize="6" fill="#4f9bd6">2D</text>
      <path d="M7 29.500h4l-2 2zM7 55h4l-2 2z" fill="#888" />
      <path d="M2 34.500h14" stroke="#ccc" />
      <rect x="4" y="39" width="8" height="7" fill="#9c9" />
      <circle cx="11" cy="45" r="2.500" fill="#fff" stroke="#888" />
      <path d="M13 47l2 3" stroke="#888" />
      <circle cx="15" cy="63" r="2" fill="none" stroke="#999" />
    </svg>
  </div>
);

const SheetView = () => (
  <main className="flex min-w-0 flex-1 flex-col">
    <DocTabs />
    <div className="flex min-h-0 flex-1 bg-white">
      <div className="relative min-w-0 flex-1">
        <SheetDrawing />
        <NavBar />
      </div>
      <div className="flex w-3 shrink-0 flex-col items-center justify-between bg-[#e9e9e9] py-0.5">
        <ChevronUp size={8} color="#777" />
        <span className="h-2.5 w-[3px] rounded bg-[#c6c6c6]" />
        <ChevronDown size={8} color="#777" />
      </div>
    </div>
    <div className="flex h-[11px] shrink-0 items-center bg-[#f0f0f0]">
      <svg width="10" height="6" viewBox="0 0 10 6" className="shrink-0">
        <circle cx="1.500" cy="4" r="1.500" fill="none" stroke="#666" />
        <circle cx="5.500" cy="4" r="1.500" fill="none" stroke="#666" />
        <path d="M2.500 3L5 .5M6.500 3L9 .5" stroke="#666" />
      </svg>
      <svg width="6" height="8" viewBox="0 0 6 8" className="mr-[5px] ml-2 shrink-0">
        <circle cx="3" cy="3" r="2.500" fill="#4cb4bf" />
        <path d="M2 6h2v2H2z" fill="#555" />
      </svg>
      <div className="flex h-full flex-1 items-center justify-between bg-[#e6e6e6] px-px">
        <ChevronLeft size={8} color="#777" />
        <span className="h-[3px] w-2.5 rounded bg-[#c6c6c6]" />
        <ChevronRight size={8} color="#777" />
      </div>
      <svg width="14" height="6" viewBox="0 0 14 6">
        <path d="M6 4.500h1M8 4.500h1M8 2.500h1M10.500 0v5" stroke="#888" />
      </svg>
    </div>
  </main>
);

/* ---------- Properties palette ---------- */

interface PropRow {
  name: string;
  value?: string;
  kind?: 'check' | 'button';
  muted?: boolean;
}

const generalRows: PropRow[] = [
  { name: 'Зависимость уровня', value: 'Независимый', muted: true },
  { name: 'Ссылающийся лист', muted: true },
  { name: 'Ссылающийся узел', muted: true },
  { name: 'Текущее изменение у...', kind: 'check', muted: true },
  { name: 'Текущее изменение у...', muted: true },
  { name: 'Текущее изменение у...', muted: true },
  { name: 'Дата текущего измен...', muted: true },
  { name: 'Описание текущего и...', muted: true },
  { name: 'Текущее изменение', muted: true },
  { name: 'Утвердил', value: 'Руководитель' },
  { name: 'Разработал', value: 'Проектировщик' },
  { name: 'Проверил', value: 'Проверил' },
  { name: 'Чертил', value: 'Разработал' },
  { name: 'Номер листа', value: 'АР12' },
  { name: 'Имя листа', value: 'Фасады Юг и Север' },
  { name: 'Дата утверждения ли...', value: '08/16/25' },
  { name: 'Занесение в список л...', value: 'on', kind: 'check' },
  { name: 'Изменения на листе', value: 'Изменить...', kind: 'button' },
  { name: 'ADSK_Штамп Раздел ...', value: 'АР' },
];

const dataRows: PropRow[] = [
  { name: 'ADSK_Примечание' },
  ...Array.from({ length: 13 }, () => ({ name: 'ADSK_Штамп боково...' })),
  { name: 'ADSK_Штамп титульн...' },
  { name: 'ADSK_Штамп титульн...' },
  { name: 'ADSK_Штамп титульн...', value: 'Проектировщик' },
  { name: 'ADSK_Штамп титульн...', value: 'Петров И.И.' },
];

const PropValue = ({ row }: { row: PropRow }) => {
  if (row.kind === 'check') {
    return (
      <span className="relative flex pl-px">
        <input
          type="checkbox"
          aria-label={row.name}
          defaultChecked={row.value === 'on'}
          disabled={row.muted}
          className="peer h-[7px] w-[7px] appearance-none border border-[#999] bg-white checked:border-[#555] checked:bg-[#555]"
        />
        <svg width="7" height="7" viewBox="0 0 7 7" className="pointer-events-none absolute hidden peer-checked:block">
          <path d="M1.500 3.500L3 5l2.500-3" fill="none" stroke="#fff" />
        </svg>
      </span>
    );
  }
  if (row.kind === 'button') {
    return <button className="h-[9px] w-full border border-[#bbb] bg-[#f0f0f0] pl-5 leading-[7px]">{row.value}</button>;
  }
  return <>{row.value}</>;
};

const PropRows = ({ rows }: { rows: PropRow[] }) => (
  <>
    {rows.map((row, i) => (
      <tr key={i} className={`h-[11px] border-b border-[#f2f2f2] ${row.muted ? 'text-[#9a9a9a]' : 'text-[#333]'}`}>
        <th scope="row" className="w-[86px] overflow-hidden border-r border-[#eee] p-0 pl-1 text-left font-normal">
          {row.name}
        </th>
        <td className="overflow-hidden p-0 pl-px">
          <PropValue row={row} />
        </td>
      </tr>
    ))}
  </>
);

const PropertiesPalette = () => (
  <aside className="flex w-[145px] shrink-0 flex-col border-l-2 border-[#bdbdbd] bg-[#f2f2f2]">
    <h2 className="flex h-3 shrink-0 items-center border-t border-[#b5b5b5] bg-[#d0d0d0] pl-px">Свойства</h2>
    <div className="flex shrink-0 items-center gap-1 p-px">
      <div className="flex h-10 w-10 items-center justify-center border border-[#c4c4c4] bg-[#f7f7f7]">
        <svg width="20" height="15" viewBox="0 0 20 15">
          <path d="M1 1h13l5 5v8H1z" fill="#fff" stroke="#555" strokeWidth="1.500" />
          <path d="M13 1v5h6z" fill="#555" />
        </svg>
      </div>
      Лист
    </div>
    <div className="flex h-5 shrink-0 items-center gap-1">
      <div className="relative flex h-[15px] w-[121px] shrink-0 items-center border-b-2 border-[#d6d6d6] bg-[#f8f8f8]">
        <select aria-label="Тип" className="w-full appearance-none pl-0.5">
          <option>Лист: Фасады Юг и Север</option>
        </select>
        <ChevronDown size={7} color="#666" className="pointer-events-none absolute right-0.5" />
      </div>
      <button className="flex flex-1 items-center gap-0.5 overflow-hidden whitespace-nowrap">
        <svg width="10" height="10" viewBox="0 0 10 10" className="shrink-0">
          <path d="M.5 1.500h3v8h-3zM3.500.5h3v4M.5 5h3" fill="#fff" stroke="#456" />
          <rect x="4.500" y="4.500" width="5" height="5" fill="#cde" stroke="#345" />
        </svg>
        Изменить тип
      </button>
    </div>
    <div className="min-h-0 flex-1 overflow-hidden bg-white">
      <table className="w-full table-fixed border-collapse leading-[10px] whitespace-nowrap">
        <tbody>
          <PropRows rows={generalRows} />
          <tr className="h-3 bg-[#f0f0f0]">
            <th colSpan={2} className="p-0 pl-0.5 text-left font-normal">Данные</th>
          </tr>
          <PropRows rows={dataRows} />
        </tbody>
      </table>
    </div>
    <a href="#help" className="h-3.5 shrink-0 leading-[9px] text-[#1b78b5] underline">
      Справка по свойствам
    </a>
  </aside>
);

const StatusBar = () => (
  <footer className="flex h-[15px] shrink-0 items-center bg-[#f3f3f3] whitespace-nowrap">
    <span className="flex-1">Щелчок - выбор, TAB - варианты, CTRL - добавление, SHIFT - снятие выбора.</span>
    <svg width="10" height="10" viewBox="0 0 10 10" className="shrink-0">
      <path d="M0 3l4-2v7L1 7z" fill="#5a9" />
      <path d="M3 3l4 1v6L4 9z" fill="#38c" />
      <path d="M7 1l3 1v5L7 8z" fill="#c96" />
    </svg>
    <div className="flex w-[449px] shrink-0 items-center gap-1 pl-[122px] text-[#999]">
      <ChevronDown size={7} color="#aaa" />
      <svg width="11" height="10" viewBox="0 0 11 10">
        <path d="M5.500.5h4v3h-4zM1.500 5.500h5v3h-5zM5 3L3.500 5" fill="none" stroke="#888" />
      </svg>
      <span className="w-4">:0</span>
      <svg width="12" height="11" viewBox="0 0 12 11">
        <path d="M.5.5h10v9H.5zM2 2.500h1M5 2.500h4M2 4.500h1M5 4.500h4M2 6.500h1M5 6.500h4" fill="none" stroke="#666" />
      </svg>
      <svg width="12" height="11" viewBox="0 0 12 11">
        <path d="M1 .5h9M1 2.500h9M5 4.500h5M5 6.500h5M1 8.500h9M2.500 4v3" fill="none" stroke="#777" />
      </svg>
      <span className="w-[115px]">Главная модель</span>
      <ChevronDown size={7} color="#aaa" />
    </div>
  </footer>
);

const App = () => (
  <div className="flex h-screen flex-col overflow-hidden bg-[#f5f5f5] font-['Open_Sans','Noto_Sans',sans-serif] text-[7px] leading-[10px] text-[#333]">
    <TitleBar />
    <MenuTabs />
    <Ribbon />
    <QuickAccess />
    <div className="h-4 shrink-0 bg-[#f5f5f5]" />
    <div className="flex min-h-0 flex-1">
      <SheetView />
      <PropertiesPalette />
    </div>
    <StatusBar />
  </div>
);

export default App;
